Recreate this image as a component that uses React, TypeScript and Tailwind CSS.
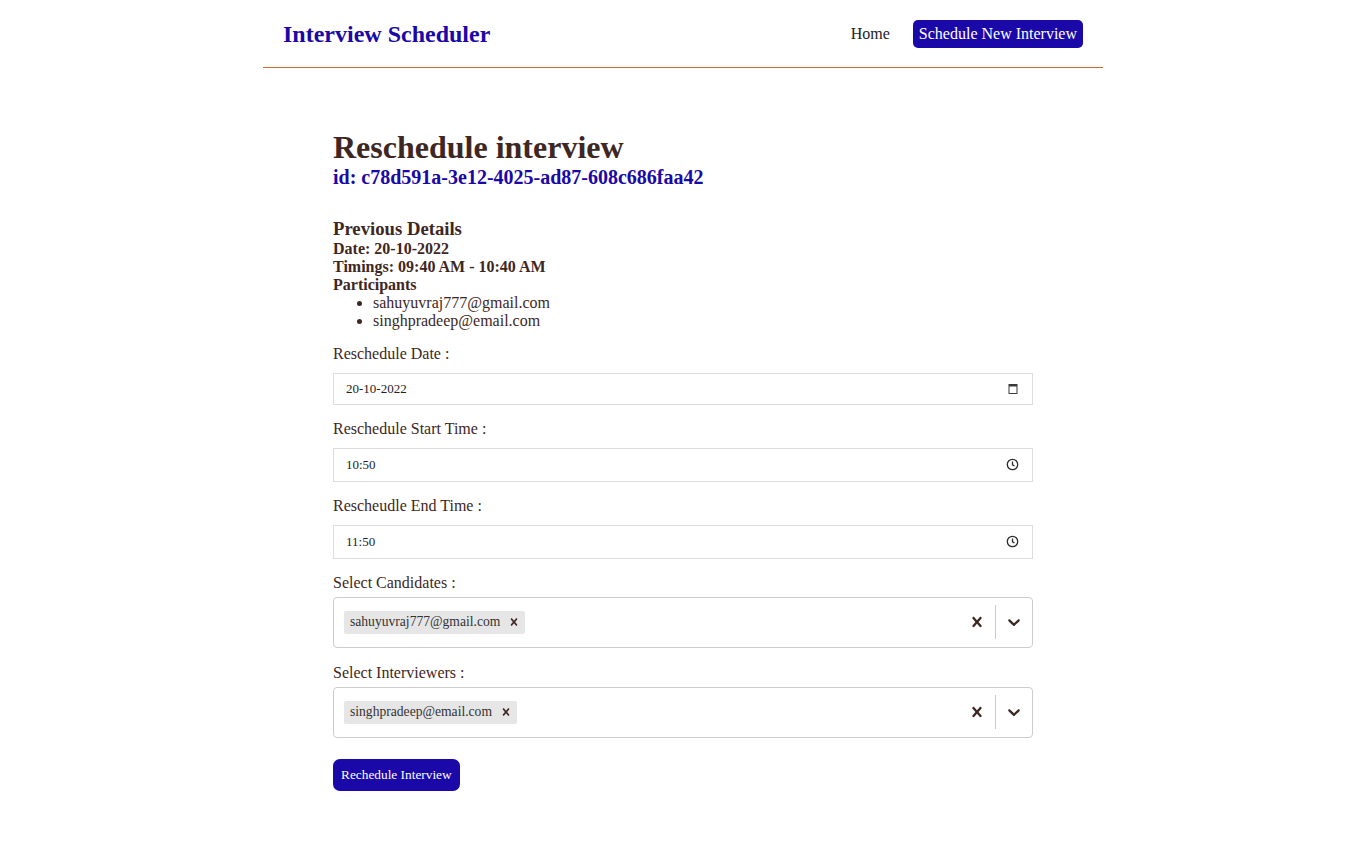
import React from "react";

const BLUE = "bg-[#1a08a8]";

const ClearIcon = ({ size = 20 }: { size?: number }) => (
  <svg width={size} height={size} viewBox="0 0 20 20" fill="currentColor" aria-hidden>
    <path d="M14.348 14.849c-0.469 0.469-1.229 0.469-1.697 0l-2.651-3.030-2.651 3.029c-0.469 0.469-1.229 0.469-1.697 0-0.469-0.469-0.469-1.229 0-1.697l2.758-3.15-2.759-3.152c-0.469-0.469-0.469-1.228 0-1.697s1.228-0.469 1.697 0l2.652 3.031 2.651-3.031c0.469-0.469 1.228-0.469 1.697 0s0.469 1.229 0 1.697l-2.758 3.152 2.758 3.15c0.469 0.469 0.469 1.229 0 1.698z" />
  </svg>
);

const ChevronIcon = () => (
  <svg width={20} height={20} viewBox="0 0 20 20" fill="currentColor" aria-hidden>
    <path d="M4.516 7.548c0.436-0.446 1.043-0.481 1.576 0l3.908 3.747 3.908-3.747c0.533-0.481 1.141-0.446 1.574 0 0.436 0.445 0.408 1.197 0 1.615-0.406 0.418-4.695 4.502-4.695 4.502-0.217 0.223-0.502 0.335-0.787 0.335s-0.57-0.112-0.789-0.335c0 0-4.287-4.084-4.695-4.502s-0.436-1.17 0-1.615z" />
  </svg>
);

const CalendarIcon = () => (
  <svg width={12} height={12} viewBox="0 0 12 12" aria-hidden>
    <rect x="1.5" y="1" width="9" height="10" fill="#3a3a3a" />
    <rect x="2.5" y="3.5" width="7" height="6.5" fill="#fff" />
  </svg>
);

const ClockIcon = () => (
  <svg width={13} height={13} viewBox="0 0 14 14" fill="none" stroke="#2b2b2b" strokeWidth="1.4" aria-hidden>
    <circle cx="7" cy="7" r="5.6" />
    <path d="M7 3.8V7.3L9.2 8.6" />
  </svg>
);

// fake native date/time field
const Field = ({ value, icon, h }: { value: string; icon: React.ReactNode; h: string }) => (
  <div className={`flex ${h} w-full items-center justify-between border border-[#dcdcdc] pl-[12px] pr-[13px] text-[13px] text-[#222]`}>
    <span>{value}</span>
    {icon}
  </div>
);

const MultiSelect = ({ chip }: { chip: string }) => (
  <div className="flex h-[51px] w-full items-center rounded-[4px] border border-[#cccccc] pl-[10px]">
    <div className="flex flex-1 items-center">
      <div className="flex h-[23px] items-center rounded-[2px] bg-[#e6e6e6]">
        <span className="pl-[6px] pr-[3px] text-[13.6px] text-[#333]">{chip}</span>
        <span className="flex items-center px-[4px] text-[#3e2723]">
          <ClearIcon size={14} />
        </span>
      </div>
    </div>
    <div className="flex items-center text-[#3e2723]">
      <span className="flex p-[8px]">
        <ClearIcon />
      </span>
      <span className="h-[34px] w-px bg-[#cccccc]" />
      <span className="flex p-[8px]">
        <ChevronIcon />
      </span>
    </div>
  </div>
);

export default function App() {
  return (
    <div className="min-h-screen bg-white font-['Liberation_Serif','Times_New_Roman',serif] text-[#3e2723]">
      {/* navbar */}
      <header className="mx-auto flex h-[68px] w-[840px] items-center justify-between border-b border-[#d2692f] pl-[20px] pr-[20px]">
        <h1 className="text-[24px] font-bold text-[#1a08a8]">Interview Scheduler</h1>
        <nav className="flex items-center gap-[23px] text-[16px]">
          <a className="text-[#222]">Home</a>
          <a className={`${BLUE} flex h-[28px] items-center rounded-[5px] px-[6px] text-white`}>
            Schedule New Interview
          </a>
        </nav>
      </header>

      <main className="mx-auto w-[700px] pt-[61px] pb-[40px]">
        <h2 className="text-[32px] leading-[37px] font-bold">Reschedule interview</h2>
        <h3 className="text-[20px] leading-[23px] font-bold text-[#1a08a8]">
          id: c78d591a-3e12-4025-ad87-608c686faa42
        </h3>

        <div className="mt-[29px]">
          <h4 className="text-[18.7px] leading-[21.5px] font-bold">Previous Details</h4>
          <p className="text-[16px] leading-[18px] font-bold">Date: 20-10-2022</p>
          <p className="text-[16px] leading-[18px] font-bold">Timings: 09:40 AM - 10:40 AM</p>
          <p className="text-[16px] leading-[18px] font-bold">Participants</p>
          <ul className="list-disc pl-[40px] text-[16px] leading-[18px]">
            <li>sahuyuvraj777@gmail.com</li>
            <li>singhpradeep@email.com</li>
          </ul>
        </div>

        <div className="mt-[15px] text-[16px] leading-[18px]">
          <label className="block">Reschedule Date :</label>
          <div className="mt-[10px]">
            <Field value="20-10-2022" icon={<CalendarIcon />} h="h-[32px]" />
          </div>

          <label className="mt-[15px] block">Reschedule Start Time :</label>
          <div className="mt-[10px]">
            <Field value="10:50" icon={<ClockIcon />} h="h-[34px]" />
          </div>

          <label className="mt-[15px] block">Rescheudle End Time :</label>
          <div className="mt-[10px]">
            <Field value="11:50" icon={<ClockIcon />} h="h-[34px]" />
          </div>

          <label className="mt-[15px] block">Select Candidates :</label>
          <div className="mt-[5px]">
            <MultiSelect chip="sahuyuvraj777@gmail.com" />
          </div>

          <label className="mt-[16px] block">Select Interviewers :</label>
          <div className="mt-[5px]">
            <MultiSelect chip="singhpradeep@email.com" />
          </div>

          <button className={`${BLUE} mt-[21px] h-[32px] rounded-[7px] px-[8px] text-[13.33px] text-white`}>
            Rechedule Interview
          </button>
        </div>
      </main>
    </div>
  );
}
